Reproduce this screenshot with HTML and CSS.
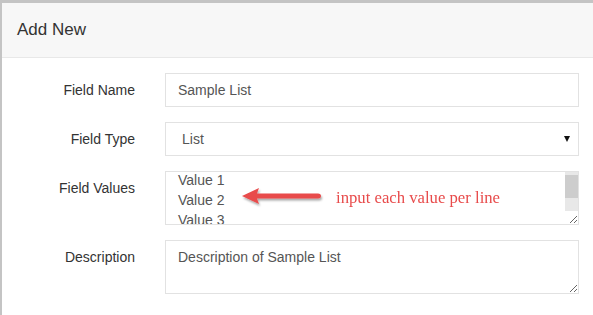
FILE: index.html
```html
<!DOCTYPE html>
<html lang="en">
<head>
  <meta charset="UTF-8" />
  <title>Add New</title>
  <link rel="stylesheet" href="styles.css">
</head>
<body>
  <div class="panel">
    <div class="panel-heading">Add New</div>
    <form class="panel-body">
      <label class="control-label" for="field-name">Field Name</label>
      <input class="form-control" type="text" id="field-name" value="Sample List" />

      <label class="control-label" for="field-type">Field Type</label>
      <div class="select-wrap">
        <select class="form-control" id="field-type">
          <option>List</option>
          <option>Text</option>
        </select>
        <span class="caret"></span>
      </div>

      <label class="control-label" for="field-values">Field Values</label>
      <div class="values-wrap">
        <textarea class="form-control values" id="field-values">Value 1
Value 2
Value 3
Value 4</textarea>
        <div class="scrollbar"><div class="thumb"></div></div>
        <div class="hint">
          <svg width="92" height="30" viewBox="0 0 92 30">
            <defs>
              <filter id="shadow" x="-20%" y="-40%" width="140%" height="200%">
                <feDropShadow dx="1" dy="2" stdDeviation="1.3" flood-color="#000" flood-opacity="0.35"/>
              </filter>
            </defs>
            <g filter="url(#shadow)">
              <path d="M4 13 L21 5 L19 10.5 L80 10.5 Q83 10.5 83 13 Q83 15.5 80 15.5 L19 15.5 L21 21 Z" fill="#e84b4b"/>
            </g>
          </svg>
          <span>input each value per line</span>
        </div>
      </div>

      <label class="control-label" for="description">Description</label>
      <textarea class="form-control" id="description">Description of Sample List</textarea>
    </form>
  </div>

  <script>
    document.getElementById('field-values').scrollTop = 8;
  </script>
</body>
</html>
```

FILE: styles.css
```css
body {
  margin: 0;
  font-family: "Liberation Sans", Arial, sans-serif;
  font-size: 14px;
  color: #333;
  background: #fff;
}
.panel {
  border-top: 3px solid #c4c4c4;
  border-left: 2px solid #c4c4c4;
  min-height: 312px;
}
.panel-heading {
  background: #f7f7f7;
  border-bottom: 1px solid #e8e8e8;
  height: 54px;
  line-height: 54px;
  padding-left: 15px;
  font-size: 17px;
}
.panel-body {
  display: grid;
  grid-template-columns: 133px 414px;
  column-gap: 30px;
  row-gap: 15px;
  padding-top: 15px;
}
.control-label {
  text-align: right;
  padding-top: 7px;
  line-height: 20px;
}
.form-control {
  display: block;
  box-sizing: border-box;
  width: 100%;
  height: 34px;
  padding: 6px 12px;
  border: 1px solid #e2e2e2;
  border-radius: 0;
  font-family: "Liberation Sans", Arial, sans-serif;
  font-size: 14px;
  line-height: 20px;
  color: #555;
  background: #fff;
  margin: 0;
}
.select-wrap {
  position: relative;
}
.select-wrap select {
  appearance: none;
  -webkit-appearance: none;
  padding-left: 16px;
}
.caret {
  position: absolute;
  right: 9px;
  top: 14px;
  border-left: 3.5px solid transparent;
  border-right: 3.5px solid transparent;
  border-top: 6px solid #111;
}
textarea.form-control {
  height: 54px;
  resize: vertical;
}
.values-wrap {
  position: relative;
}
.values {
  padding-right: 26px;
}
.scrollbar {
  position: absolute;
  top: 1px;
  right: 1px;
  bottom: 14px;
  width: 13px;
  background: #e8e8e8;
  pointer-events: none;
}
.thumb {
  margin-top: 3px;
  height: 23px;
  background: #cdcdcd;
}
.hint {
  position: absolute;
  left: 73px;
  top: 12px;
  display: flex;
  align-items: center;
  pointer-events: none;
}
.hint span {
  margin-left: 6px;
  font-family: "Liberation Serif", "Times New Roman", serif;
  font-size: 16.7px;
  color: #e84b4b;
}
```
